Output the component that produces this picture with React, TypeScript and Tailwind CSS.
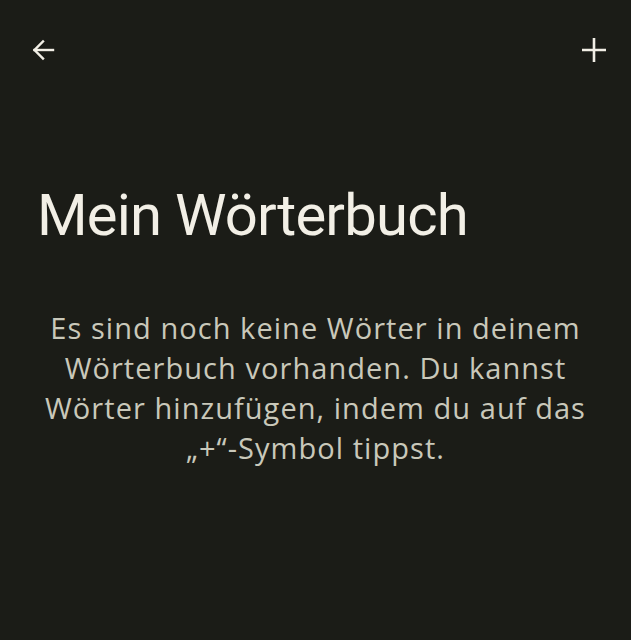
export default function App() {
  return (
    <div className="w-[631px] h-[640px] bg-[#1b1c17] font-['Roboto',sans-serif] overflow-hidden">
      <div className="flex items-center justify-between h-[100px] pl-[31px] pr-[25px]">
        <svg width="24" height="24" viewBox="0 0 24 24" fill="none" stroke="#f2efe6" strokeWidth="2.4" strokeLinecap="square">
          <path d="M22 12H3.5" />
          <path d="M12 3.5L3.5 12L12 20.5" />
        </svg>
        <svg width="24" height="24" viewBox="0 0 24 24" fill="none" stroke="#f2efe6" strokeWidth="2.6">
          <path d="M12 0v24M0 12h24" />
        </svg>
      </div>
      <h1 className="mt-[80px] pl-[37px] text-[58px] leading-[70px] text-[#f2efe6] tracking-[-0.8px]">
        Mein Wörterbuch
      </h1>
      <p className="mt-[58px] text-center font-['Open_Sans',sans-serif] font-medium text-[29px] leading-[40px] tracking-[1.05px] text-[#c9c8ba]">
        Es sind noch keine Wörter in deinem
        <br />
        Wörterbuch vorhanden. Du kannst
        <br />
        Wörter hinzufügen, indem du auf das
        <br />
        „+“-Symbol tippst.
      </p>
    </div>
  );
}
